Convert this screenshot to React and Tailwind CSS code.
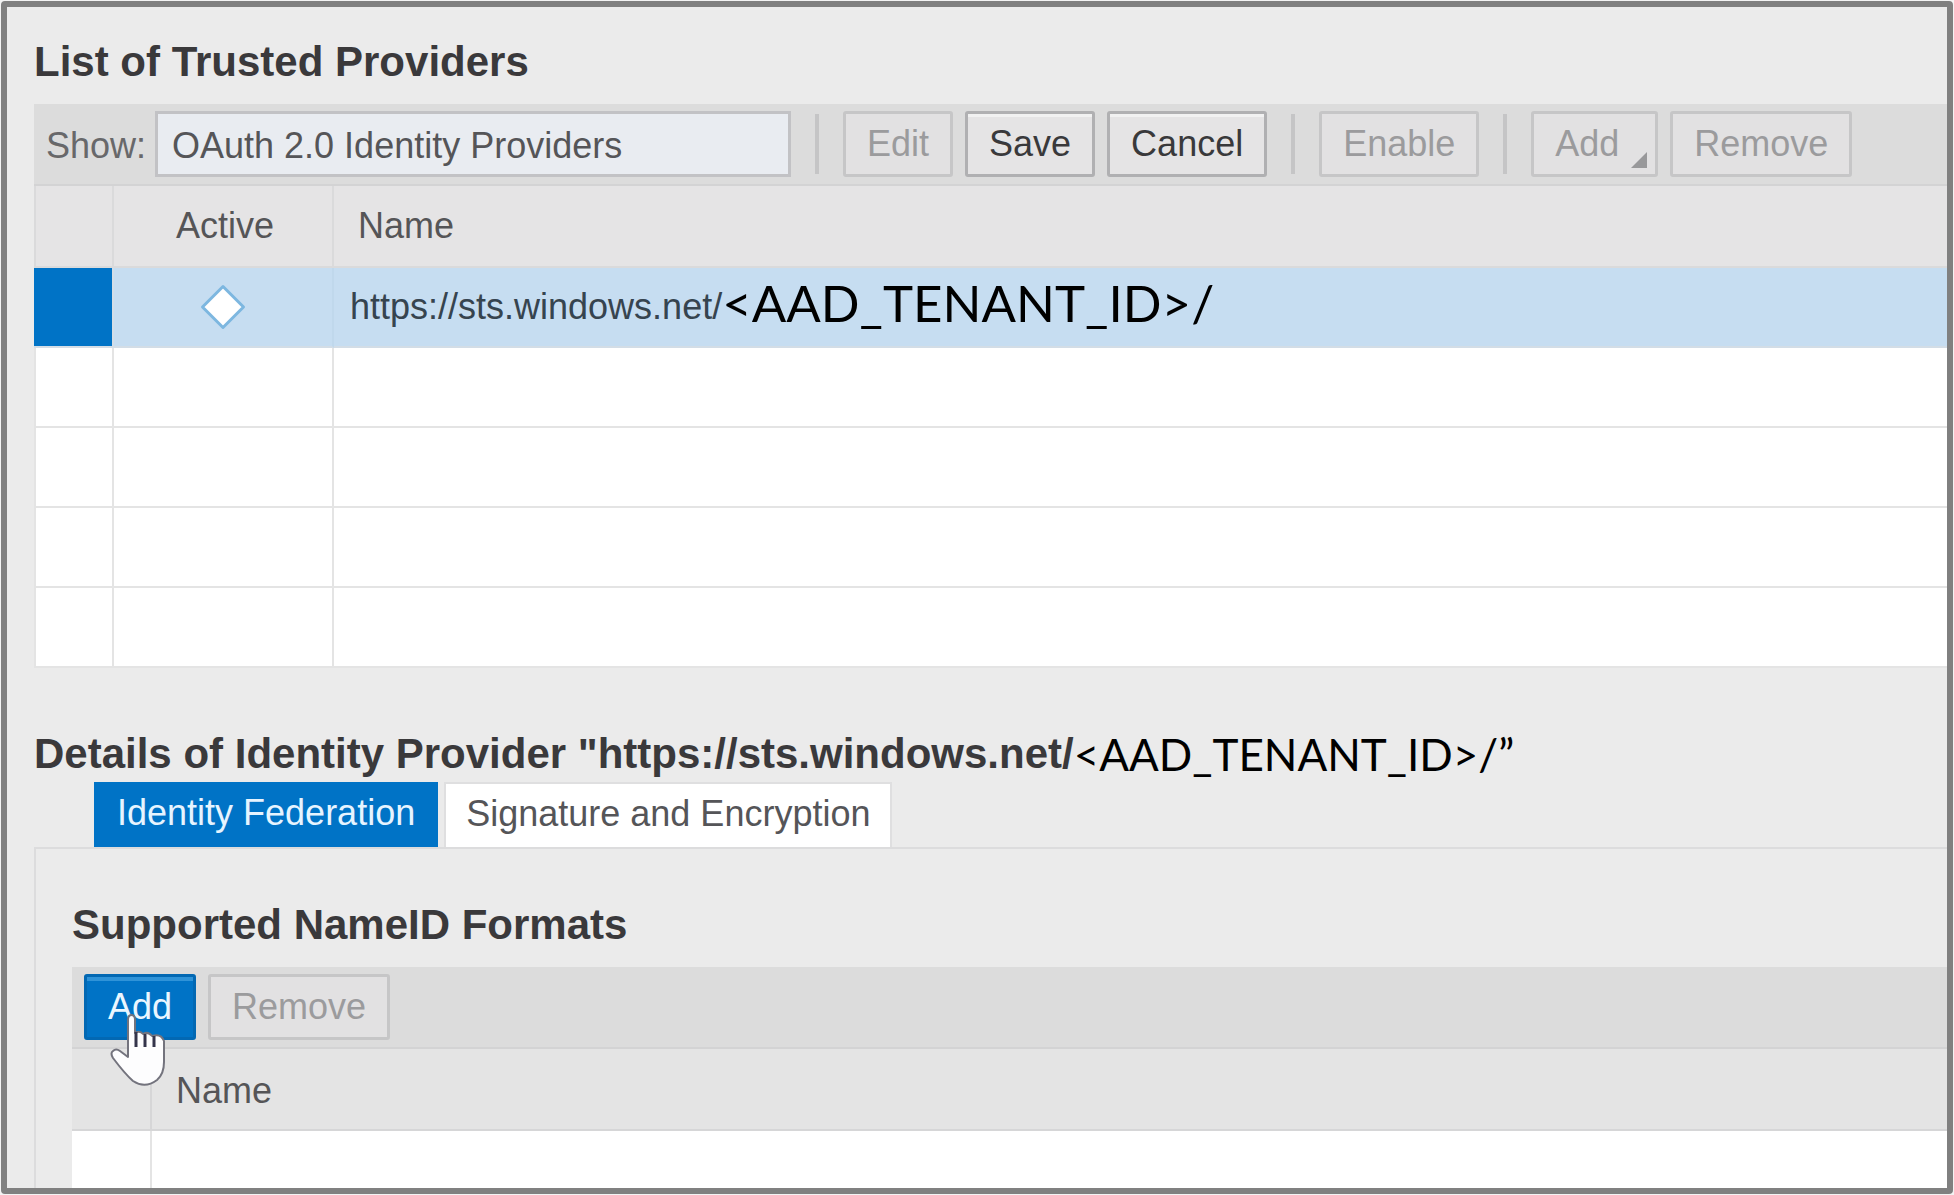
function ToolButton({ children, disabled, primary, className = "" }) {
  const tone = primary
    ? "border-[#0268b3] bg-[#0073c6] text-[#eaf6ff] shadow-[inset_0_4px_0_#2f93d8]"
    : disabled
      ? "border-[#c6c6c7] bg-[#e2e1e2] text-[#9b9b9d]"
      : "border-[#b0b0b2] bg-[#e5e4e5] text-[#39393b] shadow-[inset_0_3px_0_#f1f1f1]";
  return (
    <button
      type="button"
      disabled={disabled}
      className={`relative h-[66px] shrink-0 rounded-[3px] border-[3px] px-[21px] leading-10 ${tone} ${className}`}
    >
      {children}
    </button>
  );
}

function Separator() {
  return <div className="mx-6 h-[60px] w-1 shrink-0 bg-[#c5c5c6]" />;
}

function Diamond() {
  return (
    <svg viewBox="0 0 46 46" className="mx-auto block size-[46px]" role="img" aria-label="Inactive">
      <path d="M23 2.5 43.500 23 23 43.500 2.500 23Z" fill="#fff" stroke="#7db7e0" strokeWidth="3" strokeLinejoin="round" />
    </svg>
  );
}

function HandCursor() {
  return (
    <svg viewBox="0 0 56 74" className="pointer-events-none absolute left-[26px] top-[39px] z-10 h-[74px] w-[56px]" aria-hidden="true">
      <path
        d="M18 44V7Q18 2 21.500 2T25 7V20Q30 17 33 21Q38 18 42 23Q51 20 54 28V49Q54 61 47 67Q35 76 23 68Q15 61 3 45Q0 40 3 38Q6 35 10 38Z"
        fill="#fdfdfe"
        stroke="#73737d"
        strokeWidth="2"
        strokeLinejoin="round"
      />
      <path d="M26 19V34M35 21V34M44 23V34" fill="none" stroke="#34344a" strokeWidth="3" />
    </svg>
  );
}

function TrustedProviders() {
  return (
    <section>
      <h1 className="mt-[29px] text-[42px] font-bold leading-[52px] text-[#3a393b]">List of Trusted Providers</h1>
      <div className="mt-4 flex h-[82px] items-center border-b-2 border-[#d3d3d4] bg-[#dcdcdc] pl-3">
        <label htmlFor="show" className="w-[109px] shrink-0 pt-1 text-[#68686a]">
          Show:
        </label>
        <select
          id="show"
          className="h-[66px] w-[636px] shrink-0 appearance-none rounded-none border-[3px] border-[#c2c2c5] bg-[#e9ecf1] pl-3.5 pt-1 leading-10 text-[#555558]"
        >
          <option>OAuth 2.0 Identity Providers</option>
        </select>
        <Separator />
        <div className="flex gap-3">
          <ToolButton disabled>Edit</ToolButton>
          <ToolButton>Save</ToolButton>
          <ToolButton>Cancel</ToolButton>
        </div>
        <Separator />
        <ToolButton disabled>Enable</ToolButton>
        <Separator />
        <div className="flex gap-3">
          <ToolButton disabled className="pr-9">
            Add
            <svg viewBox="0 0 16 16" className="absolute bottom-1.5 right-2 size-4" aria-hidden="true">
              <path d="M16 0V16H0Z" fill="#98989a" />
            </svg>
          </ToolButton>
          <ToolButton disabled>Remove</ToolButton>
        </div>
      </div>
      <table className="w-full table-fixed border-separate border-spacing-0">
        <colgroup>
          <col className="w-[80px]" />
          <col className="w-[220px]" />
          <col />
        </colgroup>
        <thead>
          <tr className="h-[82px] bg-[#e5e4e5] text-[#555557]">
            <th className="border-b-2 border-l-2 border-r-2 border-[#dadadb]" aria-label="Selection" />
            <th className="border-b-2 border-r-2 border-[#dadadb] p-0 pl-1 font-normal">Active</th>
            <th className="border-b-2 border-[#dadadb] p-0 pl-6 text-left font-normal">Name</th>
          </tr>
        </thead>
        <tbody>
          <tr className="h-[80px] bg-[#c6ddf1] text-[#36444f]">
            <td className="border-b-2 border-r-2 border-[#d3dde6] bg-[#0073c6] p-0" />
            <td className="border-b-2 border-r-2 border-b-[#d3dde6] border-r-[#c0d8ec] p-0">
              <Diamond />
            </td>
            <td className="border-b-2 border-[#d3dde6] p-0 pl-4">
              <div className="flex items-center whitespace-nowrap">
                <span>https://sts.windows.net/</span>
                <span className="pb-2 font-[Lato] text-[51px] leading-[60px] text-black">&lt;AAD_TENANT_ID&gt;/</span>
              </div>
            </td>
          </tr>
          {[1, 2, 3, 4].map((n) => (
            <tr key={n} className="h-[80px] bg-white">
              <td className="border-b-2 border-l-2 border-r-2 border-[#e4e4e4]" />
              <td className="border-b-2 border-r-2 border-[#e4e4e4]" />
              <td className="border-b-2 border-[#e4e4e4]" />
            </tr>
          ))}
        </tbody>
      </table>
    </section>
  );
}

function ProviderDetails() {
  return (
    <section className="flex flex-1 flex-col">
      <h2 className="mt-[58px] flex items-center whitespace-nowrap text-[42px] font-bold leading-[56px] text-[#3a393b]">
        <span>Details of Identity Provider "https://sts.windows.net/</span>
        <span className="font-[Lato] text-[44px] font-normal text-black">&lt;AAD_TENANT_ID&gt;/”</span>
      </h2>
      <div role="tablist" className="flex gap-1.5 pl-[60px]">
        <button type="button" role="tab" aria-selected="true" className="h-[65px] bg-[#0073c6] px-[23px] pb-1 text-[#e6f4ff]">
          Identity Federation
        </button>
        <button
          type="button"
          role="tab"
          aria-selected="false"
          className="h-[65px] border-2 border-b-0 border-[#dfdfe0] bg-white px-5 pb-1 text-[#555558]"
        >
          Signature and Encryption
        </button>
      </div>
      <div role="tabpanel" className="flex flex-1 flex-col border-l-2 border-t-2 border-[#dcdcdd] pl-9">
        <h3 className="mt-[50px] text-[42px] font-bold leading-[52px] text-[#3a393b]">Supported NameID Formats</h3>
        <div className="mt-4 flex h-[82px] items-center gap-3 border-b-2 border-[#d3d3d4] bg-[#dcdcdc] pl-3">
          <div className="relative flex">
            <ToolButton primary>Add</ToolButton>
            <HandCursor />
          </div>
          <ToolButton disabled>Remove</ToolButton>
        </div>
        <table className="w-full flex-1 table-fixed border-separate border-spacing-0">
          <colgroup>
            <col className="w-[80px]" />
            <col />
          </colgroup>
          <thead>
            <tr className="h-[82px] bg-[#e4e4e4] text-[#555557]">
              <th className="border-b-2 border-r-2 border-[#d6d6d7]" aria-label="Selection" />
              <th className="border-b-2 border-[#d6d6d7] p-0 pl-6 pt-1 text-left font-normal">Name</th>
            </tr>
          </thead>
          <tbody>
            <tr className="h-[57px] bg-white">
              <td className="border-r-2 border-[#e4e4e4]" />
              <td />
            </tr>
          </tbody>
        </table>
      </div>
    </section>
  );
}

export default function App() {
  return (
    <div className="flex min-h-screen flex-col bg-[#f3f3f3] p-px font-['Liberation_Sans',Arial,sans-serif] text-[36px] leading-[44px]">
      <main className="flex flex-1 flex-col overflow-hidden rounded-sm border-[6px] border-[#808080] bg-[#ebebeb] pl-[27px]">
        <TrustedProviders />
        <ProviderDetails />
      </main>
    </div>
  );
}
